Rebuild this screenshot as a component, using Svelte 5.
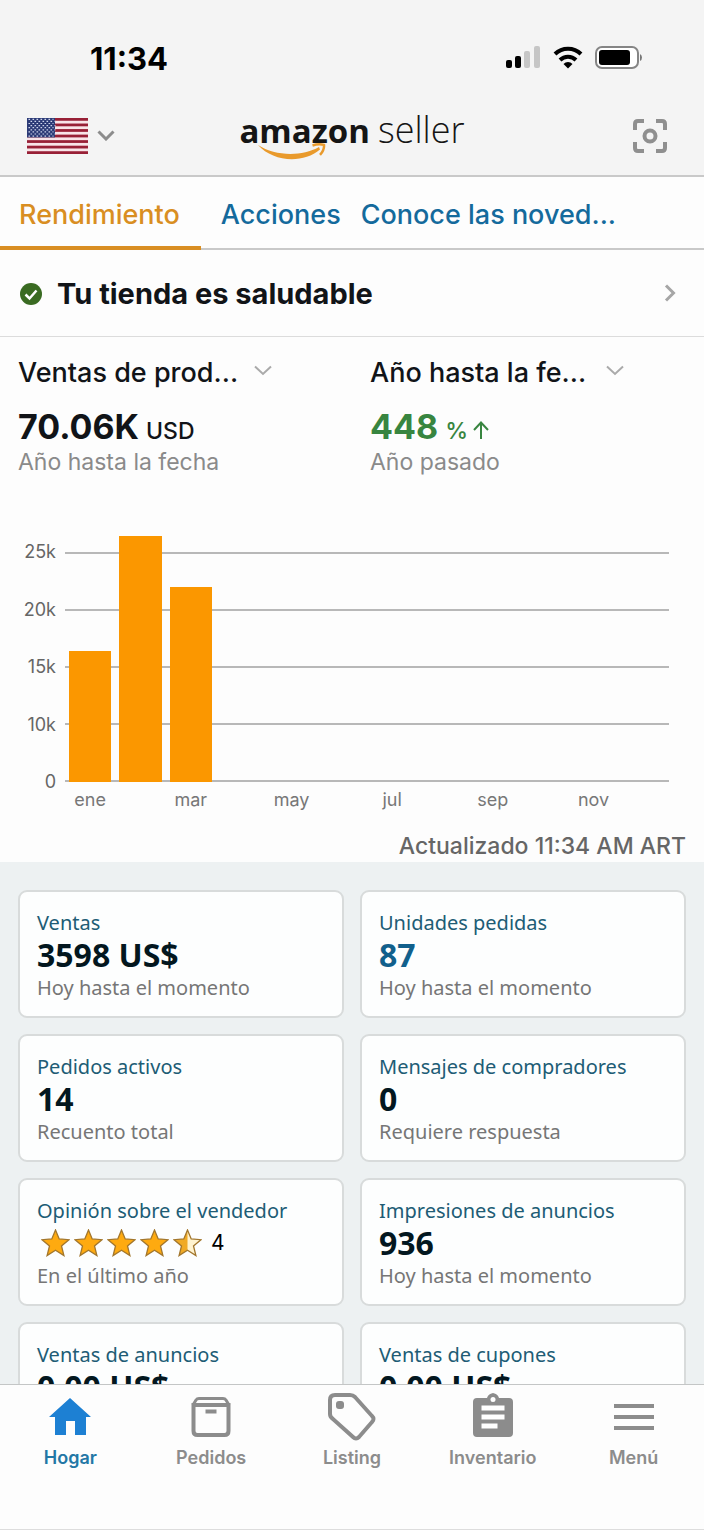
<script>
  let tabs = [
    { id: "performance", label: "Rendimiento" },
    { id: "actions", label: "Acciones" },
    { id: "news", label: "Conoce las noved..." }
  ];
  let activeTab = "performance";

  // sales by month, in % of the 25k line. months without sales yet stay at 0
  let months = [
    { name: "ene", height: 57 },
    { name: "", height: 107 },
    { name: "mar", height: 85 },
    { name: "", height: 0 },
    { name: "may", height: 0 },
    { name: "", height: 0 },
    { name: "jul", height: 0 },
    { name: "", height: 0 },
    { name: "sep", height: 0 },
    { name: "", height: 0 },
    { name: "nov", height: 0 },
    { name: "", height: 0 }
  ];
  let ticks = ["25k", "20k", "15k", "10k", "0"];

  let cards = [
    { title: "Ventas", value: "3598 US$", note: "Hoy hasta el momento" },
    { title: "Unidades pedidas", value: "87", note: "Hoy hasta el momento", blue: true },
    { title: "Pedidos activos", value: "14", note: "Recuento total" },
    { title: "Mensajes de compradores", value: "0", note: "Requiere respuesta" },
    { title: "Opinión sobre el vendedor", rating: 4, note: "En el último año" },
    { title: "Impresiones de anuncios", value: "936", note: "Hoy hasta el momento" },
    { title: "Ventas de anuncios", value: "0.00 US$" },
    { title: "Ventas de cupones", value: "0.00 US$" }
  ];

  let navItems = [
    { id: "home", label: "Hogar" },
    { id: "orders", label: "Pedidos" },
    { id: "listing", label: "Listing" },
    { id: "inventory", label: "Inventario" },
    { id: "menu", label: "Menú" }
  ];
  let activeNav = "home";

  let stripes = [0, 1, 2, 3, 4, 5, 6];
  let starRows = [0, 1, 2, 3, 4, 5, 6, 7, 8];
</script>

<div class="app">
  <header>
    <div class="status">
      <span class="time">11:34</span>
      <div class="statusIcons">
        <svg width="36" height="24" viewBox="0 0 36 24">
          <rect x="1" y="14" width="6" height="8" rx="2" />
          <rect x="10" y="10" width="6" height="12" rx="2" />
          <rect x="19" y="5" width="6" height="17" rx="2" fill="#c6c6c6" />
          <rect x="29" y="0" width="6" height="22" rx="2" fill="#c6c6c6" />
        </svg>
        <svg width="30" height="24" viewBox="0 0 30 24" fill="none" stroke="#000" stroke-width="4">
          <path d="M2 8a18.500 18.500 0 0 1 26 0" />
          <path d="M7 14a11.500 11.500 0 0 1 16 0" />
          <path d="M15 22.500l-4.500-4.600a6.500 6.500 0 0 1 9 0z" fill="#000" stroke="none" />
        </svg>
        <svg width="48" height="24" viewBox="0 0 48 24">
          <rect x="1" y="1" width="42" height="21" rx="6" fill="#fff" stroke="#858585" stroke-width="2" />
          <rect x="4" y="4" width="31" height="15" rx="3" />
          <path d="M45 8v7q2-1 2-3.500T45 8z" fill="#777" />
        </svg>
      </div>
    </div>

    <div class="topbar">
      <button class="country" aria-label="País">
        <svg width="61" height="36" viewBox="0 0 61 36">
          <rect width="61" height="36" fill="#f8e4e8" />
          {#each stripes as s}
            <rect y={s * 5.54} width="61" height="2.77" fill="#982036" />
          {/each}
          <rect width="28" height="19.400" fill="#2b3a76" />
          {#each starRows as r}
            <path d="M{r % 2 ? 3.500 : 1.500} {r * 2.1 + 1.300}h25" stroke="#cdd3ea" stroke-width="1.200" stroke-dasharray="1.600 2.400" />
          {/each}
        </svg>
        <svg width="18" height="11" viewBox="0 0 18 11" fill="none" stroke="#8c8c8c" stroke-width="3">
          <path d="M1.500 1.500L9 9l7.500-7.500" />
        </svg>
      </button>

      <div class="logo">
        <span class="amazon">amazon</span>
        <span class="seller">seller</span>
        <svg class="smile" width="70" height="18" viewBox="0 0 70 18">
          <path d="M1 2C18 13 44 14 62 4l1 2.500C46 21 16 19 1 2z" fill="#e99a2c" />
          <path d="M55.500 2.500q6-2 11.500-.6.500 5-4 10" fill="none" stroke="#e99a2c" stroke-width="2.500" />
        </svg>
      </div>

      <button class="scan" aria-label="Escanear">
        <svg width="34" height="34" viewBox="0 0 34 34" fill="none" stroke="#8f8f8f" stroke-width="4">
          <path d="M2 11V5q0-3 3-3h6M23 2h6q3 0 3 3v6M32 23v6q0 3-3 3h-6M11 32H5q-3 0-3-3v-6" />
          <circle cx="17" cy="17" r="5.500" />
        </svg>
      </button>
    </div>
  </header>

  <nav class="tabs">
    {#each tabs as tab}
      <button class:active={activeTab === tab.id} on:click={() => (activeTab = tab.id)}>{tab.label}</button>
    {/each}
  </nav>

  <main>
    <a class="health" href="#health">
      <svg width="24" height="24" viewBox="0 0 24 24">
        <circle cx="12" cy="13" r="11" fill="#3a6b22" />
        <path d="M6.500 13.500l4 4 7-8" fill="none" stroke="#fff" stroke-width="2.500" />
      </svg>
      <span>Tu tienda es saludable</span>
      <svg width="12" height="18" viewBox="0 0 12 18" fill="none" stroke="#a6a6a6" stroke-width="3">
        <path d="M2 1.500L9.500 9 2 16.500" />
      </svg>
    </a>

    <section class="metrics">
      <div>
        <label class="picker">
          <select aria-label="Métrica">
            <option>Ventas de prod...</option>
          </select>
          <svg width="18" height="14" viewBox="0 0 18 14" fill="none" stroke="#aaa" stroke-width="2">
            <path d="M1 1.500L9 9l8-7.500" />
          </svg>
        </label>
        <p class="amount">70.06K <small>USD</small></p>
        <p class="period">Año hasta la fecha</p>
      </div>
      <div>
        <label class="picker">
          <select aria-label="Periodo">
            <option>Año hasta la fe...</option>
          </select>
          <svg width="18" height="14" viewBox="0 0 18 14" fill="none" stroke="#aaa" stroke-width="2">
            <path d="M1 1.500L9 9l8-7.500" />
          </svg>
        </label>
        <p class="amount up">
          448
          <small>
            %
            <svg width="16" height="18" viewBox="0 0 16 18" fill="none" stroke="#388540" stroke-width="2">
              <path d="M8 18V2M1 9l7-7.500L15 9" />
            </svg>
          </small>
        </p>
        <p class="period">Año pasado</p>
      </div>
    </section>

    <section class="chart">
      <div class="ticks">
        {#each ticks as tick}
          <span>{tick}</span>
        {/each}
      </div>
      <div class="lines">
        {#each ticks as tick}
          <i></i>
        {/each}
      </div>
      <div class="bars">
        {#each months as month}
          <div class="bar" style="height: {month.height}%"></div>
        {/each}
      </div>
      <div class="months">
        {#each months as month}
          <span>{month.name}</span>
        {/each}
      </div>
    </section>
    <p class="updated">Actualizado 11:34 AM ART</p>

    <section class="cards">
      {#each cards as card}
        <article>
          <h2>{card.title}</h2>
          {#if card.rating}
            <div class="rating">
              {#each [0, 1, 2, 3, 4] as i}
                <svg width="29" height="28" viewBox="0 0 29 28">
                  <path d="M14.500 1l3.700 9 9.700.7-7.400 6.200 2.400 9.600-8.400-5.200-8.400 5.200 2.400-9.600L1.100 10.700l9.700-.7z" fill={i < 4 ? "#feaa10" : "#fff3cf"} />
                  {#if i === 4}
                    <path d="M14.500 1v20.300l-8.400 5.200 2.400-9.600L1.100 10.700l9.700-.7z" fill="#f0aa25" />
                  {/if}
                  <path d="M14.500 1l3.700 9 9.700.7-7.400 6.200 2.400 9.600-8.400-5.200-8.400 5.200 2.400-9.600L1.100 10.700l9.700-.7z" fill="none" stroke="#a2762c" stroke-width="1.300" />
                </svg>
              {/each}
              <span>{card.rating}</span>
            </div>
          {:else}
            <p class="value" class:blue={card.blue}>{card.value}</p>
          {/if}
          {#if card.note}
            <p class="note">{card.note}</p>
          {/if}
        </article>
      {/each}
    </section>
  </main>

  <nav class="bottom">
    {#each navItems as item}
      <button class:active={activeNav === item.id} on:click={() => (activeNav = item.id)}>
        <svg width="50" height="50" viewBox="0 0 50 50">
          {#if item.id === "home"}
            <path d="M25 6l21 19h-5v18H30V29h-9v14H10V25H4z" fill="#1d80d3" />
          {:else if item.id === "orders"}
            <g fill="none" stroke="#8c8c8c">
              <path d="M7.500 13v26q0 4 4 4h27q4 0 4-4V13z" stroke-width="4" />
              <path d="M7 13l3-5q1-1.500 3-1.500h24q2 0 3 1.500l3 5" stroke-width="3" />
              <path d="M19.500 19.500h11" stroke-width="4" />
            </g>
          {:else if item.id === "listing"}
            <path d="M8 3h15q3 0 5 2l17 19q3 3 0 6L32 45q-3 3-6 0L6 27q-3-2-3-5V8q0-5 5-5z" fill="none" stroke="#8c8c8c" stroke-width="4" />
            <rect x="9" y="9" width="8" height="8" rx="3" fill="#8c8c8c" />
          {:else if item.id === "inventory"}
            <path d="M9 6h10q1-4 6-5 5 1 6 5h10q4 0 4 4v31q0 4-4 4H9q-4 0-4-4V10q0-4 4-4z" fill="#8c8c8c" />
            <circle cx="25" cy="7.500" r="2.500" fill="#fff" />
            <path d="M13.500 16h23M13.500 25h23M13.500 34h16" stroke="#fff" stroke-width="5" />
          {:else}
            <path d="M5 14h40M5 25h40M5 36h40" stroke="#8c8c8c" stroke-width="4" />
          {/if}
        </svg>
        <span>{item.label}</span>
      </button>
    {/each}
  </nav>
</div>

<style>
  :global(body) {
    background: #fdfdfd;
  }

  .app {
    display: flex;
    flex-direction: column;
    height: 100vh;
    box-sizing: border-box;
    border-bottom: 1px solid #ddd;
    font-family: Inter, "Liberation Sans", sans-serif;
    color: #111418;
    background: #fdfdfd;
  }

  p, h2 {
    margin: 0;
  }

  svg {
    display: block;
    flex: none;
  }

  button {
    border: 0;
    padding: 0;
    background: none;
    font-family: inherit;
    cursor: pointer;
  }

  header {
    background: #f4f4f4;
    border-bottom: 2px solid #c9c9c9;
  }

  .status {
    display: flex;
    justify-content: space-between;
    align-items: center;
    padding: 40px 61px 0 90px;
    height: 36px;
  }

  .time {
    font-size: 31px;
    font-weight: 700;
    color: #000;
  }

  .statusIcons {
    display: flex;
    gap: 12px;
  }

  .topbar {
    display: grid;
    grid-template-columns: 1fr auto 1fr;
    align-items: center;
    height: 99px;
    padding: 20px 27px 0;
    box-sizing: border-box;
  }

  .country {
    display: flex;
    align-items: center;
    gap: 9px;
  }

  .scan {
    justify-self: end;
    margin-right: 10px;
  }

  .logo {
    position: relative;
    display: flex;
    align-items: baseline;
    gap: 8px;
    margin-bottom: 10px;
    font-family: "Open Sans", "Noto Sans", sans-serif;
    line-height: 48px;
    color: #151515;
  }

  .amazon {
    font-size: 33px;
    font-weight: 700;
  }

  .seller {
    font-size: 36px;
    font-weight: 300;
  }

  .smile {
    position: absolute;
    left: 18px;
    top: 37px;
  }

  .tabs {
    display: flex;
    height: 73px;
    box-sizing: border-box;
    border-bottom: 2px solid #c9c9c9;
  }

  .tabs button {
    box-sizing: border-box;
    height: 73px;
    padding: 6px 0 0;
    margin-left: 20px;
    border-bottom: 4px solid transparent;
    font-size: 27px;
    font-weight: 500;
    color: #146a9c;
  }

  .tabs button.active {
    margin: 0;
    padding: 6px 21px 0 19px;
    color: #d98e22;
    border-color: #d98e22;
  }

  main {
    flex: 1;
    min-height: 0;
    overflow: hidden;
  }

  .health {
    display: flex;
    align-items: center;
    gap: 14px;
    height: 86px;
    padding: 0 28px 0 19px;
    border-bottom: 1px solid #dcdcdc;
    font-size: 29px;
    font-weight: 700;
    color: inherit;
    text-decoration: none;
  }

  .health span {
    flex: 1;
  }

  .metrics {
    display: grid;
    grid-template-columns: 1fr 1fr;
    padding: 17px 0 0 18px;
    column-gap: 18px;
  }

  .picker {
    display: flex;
    justify-content: space-between;
    align-items: center;
    width: 254px;
    height: 36px;
  }

  select {
    appearance: none;
    border: 0;
    padding: 0;
    background: none;
    font-family: inherit;
    font-size: 27px;
    font-weight: 500;
    color: inherit;
  }

  .amount {
    display: flex;
    align-items: baseline;
    gap: 7px;
    margin-top: 20px;
    font-size: 34px;
    font-weight: 700;
    line-height: 34px;
  }

  .amount small {
    display: flex;
    align-items: baseline;
    gap: 5px;
    font-size: 23px;
    font-weight: 500;
  }

  .up {
    color: #388540;
  }

  .period {
    font-size: 23px;
    line-height: 28px;
    color: #8a8a8a;
  }

  .chart {
    display: grid;
    grid-template-columns: 38px 1fr;
    grid-template-rows: 230px auto;
    column-gap: 9px;
    padding: 76px 35px 0 18px;
  }

  .ticks {
    display: flex;
    flex-direction: column;
    justify-content: space-between;
    margin: -12px 0;
    text-align: right;
    font-size: 18px;
    line-height: 24px;
    color: #666;
  }

  .lines, .bars {
    grid-area: 1 / 2;
  }

  .lines {
    display: flex;
    flex-direction: column;
    justify-content: space-between;
  }

  .lines i {
    height: 2px;
    background: #b8b8b8;
  }

  .bars, .months {
    display: grid;
    grid-template-columns: repeat(12, 1fr);
  }

  .bars {
    align-items: end;
  }

  .bar {
    margin: 0 4px;
    background: #fb9700;
  }

  .months {
    grid-column: 2;
    padding-top: 6px;
    text-align: center;
    font-size: 18px;
    line-height: 24px;
    color: #777;
  }

  .updated {
    padding: 20px 18px 2px;
    text-align: right;
    font-size: 23px;
    font-weight: 500;
    line-height: 28px;
    color: #666;
  }

  .cards {
    display: grid;
    grid-template-columns: 1fr 1fr;
    gap: 16px;
    padding: 28px 18px;
    background: #edf1f2;
    font-family: "Noto Sans", "Open Sans", sans-serif;
  }

  article {
    padding: 17px 17px 13px;
    border: 2px solid #d8dbdb;
    border-radius: 9px;
    background: #fdfefe;
  }

  h2 {
    font-size: 20px;
    font-weight: 400;
    line-height: 28px;
    color: #205c75;
  }

  .value {
    font-size: 32px;
    font-weight: 700;
    line-height: 36px;
    color: #03171f;
  }

  .value.blue {
    color: #11608c;
  }

  .note {
    font-size: 20px;
    line-height: 30px;
    color: #767676;
  }

  .rating {
    display: flex;
    align-items: center;
    gap: 4px;
    height: 36px;
    padding-left: 4px;
    font-family: Inter, sans-serif;
    font-size: 21px;
    line-height: 28px;
    color: #000;
  }

  .rating span {
    padding-left: 5px;
  }

  .bottom {
    display: grid;
    grid-template-columns: repeat(5, 1fr);
    height: 144px;
    border-top: 1px solid #c4c6c6;
    background: #fdfdfd;
  }

  .bottom button {
    display: flex;
    flex-direction: column;
    align-items: center;
    gap: 5px;
    padding-top: 7px;
    font-size: 18px;
    font-weight: 600;
    line-height: 22px;
    color: #8c8c8c;
  }

  .bottom button.active {
    color: #2377a6;
  }
</style>
